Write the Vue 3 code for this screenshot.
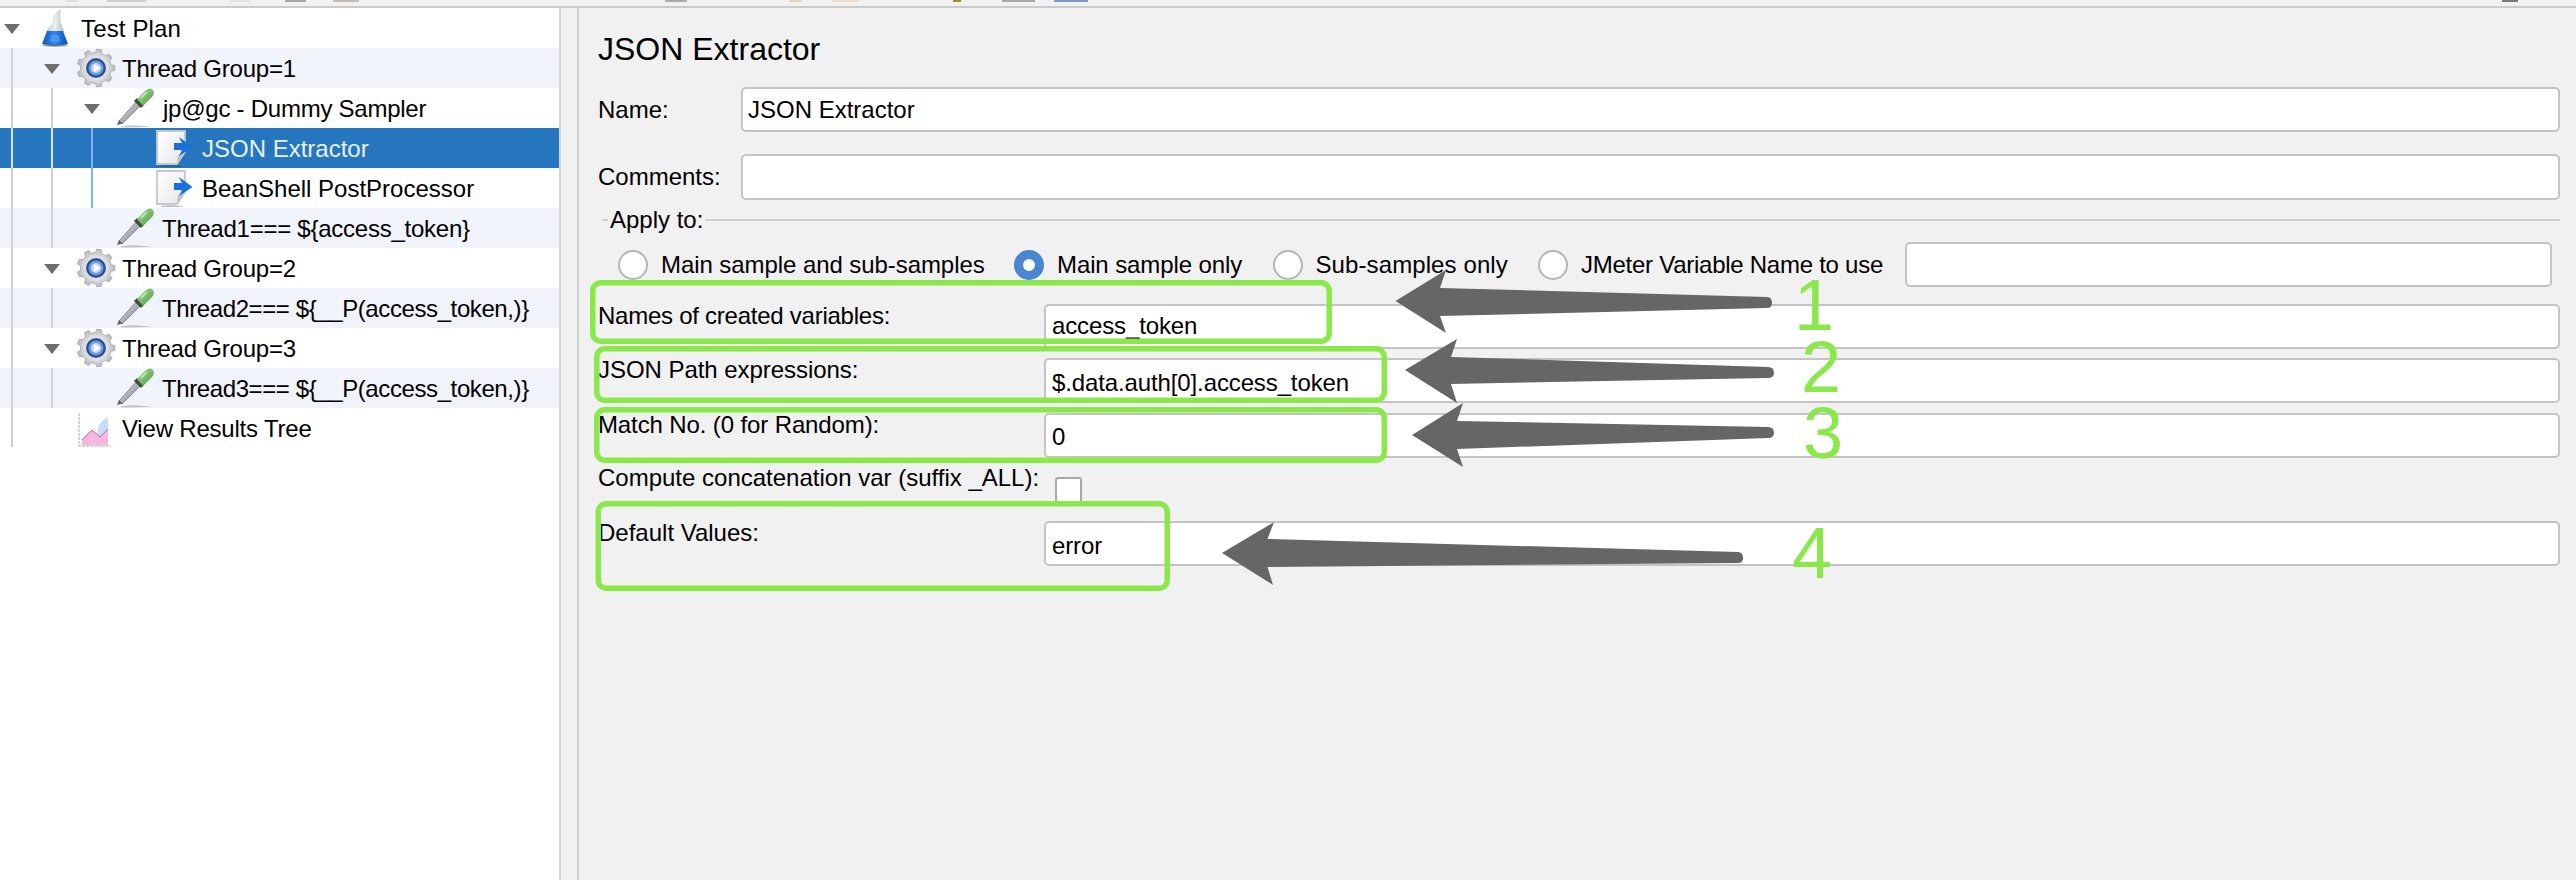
<script setup>
const gearPath = (() => {
  const cx = 20, cy = 20, teeth = 9, ro = 19, ri = 15.5
  let d = ''
  for (let i = 0; i < teeth; i++) {
    const a = (i / teeth) * Math.PI * 2
    const w = Math.PI / teeth
    const pts = [
      [ri, a - w * 0.62], [ro, a - w * 0.36], [ro, a + w * 0.36], [ri, a + w * 0.62]
    ]
    for (const [r, t] of pts) {
      d += (d ? 'L' : 'M') + (cx + r * Math.cos(t)).toFixed(2) + ' ' + (cy + r * Math.sin(t)).toFixed(2)
    }
  }
  return d + 'Z'
})()

const rows = [
  { label: 'Test Plan', icon: 'flask', arrow: 4, iconX: 40, textX: 81, guides: [], ls: 0.15 },
  { label: 'Thread Group=1', icon: 'gear', arrow: 44, iconX: 76, textX: 122, guides: [11], alt: true, ls: -0.2 },
  { label: 'jp@gc - Dummy Sampler', icon: 'dropper', arrow: 84, iconX: 116, textX: 163, guides: [11, 51], ls: -0.25 },
  { label: 'JSON Extractor', icon: 'doc', iconX: 155, textX: 202, guides: [11, 51, 91], selected: true, ls: 0 },
  { label: 'BeanShell PostProcessor', icon: 'doc', iconX: 155, textX: 202, guides: [11, 51, 91], ls: 0 },
  { label: 'Thread1=== ${access_token}', icon: 'dropper', iconX: 116, textX: 162, guides: [11, 51], alt: true, ls: -0.25 },
  { label: 'Thread Group=2', icon: 'gear', arrow: 44, iconX: 76, textX: 122, guides: [11], ls: -0.2 },
  { label: 'Thread2=== ${__P(access_token,)}', icon: 'dropper', iconX: 116, textX: 162, guides: [11, 51], alt: true, ls: -0.4 },
  { label: 'Thread Group=3', icon: 'gear', arrow: 44, iconX: 76, textX: 122, guides: [11], ls: -0.2 },
  { label: 'Thread3=== ${__P(access_token,)}', icon: 'dropper', iconX: 116, textX: 162, guides: [11, 51], alt: true, ls: -0.4 },
  { label: 'View Results Tree', icon: 'chart', iconX: 77, textX: 122, guides: [11], last: true, ls: -0.2 }
]

const radios = [
  { label: 'Main sample and sub-samples', on: false, ls: -0.07 },
  { label: 'Main sample only', on: true, ls: -0.1 },
  { label: 'Sub-samples only', on: false, ls: 0.1 },
  { label: 'JMeter Variable Name to use', on: false, ls: -0.26 }
]

const arrows = [
  '1395.5,301 1446,270 1440,288 1767,297 Q1772,297 1772,303 Q1772,308 1767,308 L1440,316 1446,333',
  '1405,370 1457,339 1451,357 1768,367 Q1774,367 1774,373 Q1774,378 1768,378 L1451,384 1457,403',
  '1412,435 1463,403 1457,421 1768,427 Q1774,427 1774,433 Q1774,438 1768,438 L1457,449 1463,467',
  '1222,553 1274,522 1267.5,539 1738,552 Q1743,552 1743,558 Q1743,563 1738,563 L1267.5,567 1273,585'
].map(p => 'M' + p + 'Z')

const boxes = [
  { x: 592.75, y: 282.75, w: 736.5, h: 58.5 },
  { x: 596.75, y: 348.75, w: 787.5, h: 51.5 },
  { x: 596.75, y: 409.75, w: 787.5, h: 50.5 },
  { x: 598.25, y: 503.75, w: 569, h: 84.5 }
]

const digits = ['1', '2', '3', '4']

const slivers = [
  { x: 66, w: 12, c: '#e2e2e2' },
  { x: 107, w: 39, c: '#d2d2d2' },
  { x: 230, w: 20, c: '#e6e6e6' },
  { x: 285, w: 21, c: '#a6a6a6' },
  { x: 333, w: 26, c: '#c2bfb8' },
  { x: 665, w: 22, c: '#acacac' },
  { x: 789, w: 12, c: '#e5d5c0' },
  { x: 832, w: 26, c: '#e8dccb' },
  { x: 953, w: 8, c: '#a88d2c' },
  { x: 1002, w: 33, c: '#a8a8a8' },
  { x: 1054, w: 34, c: '#7f9bc4' },
  { x: 2502, w: 16, c: '#7a7a7a' }
]
</script>

<template>
  <div class="page">
    <div class="strip">
      <i
        v-for="s in slivers"
        :key="s.x"
        class="sliver"
        :style="{ left: s.x + 'px', width: s.w + 'px', background: s.c }"
      ></i>
    </div>
    <div class="main">
      <aside class="tree">
        <div
          v-for="row in rows"
          :key="row.label"
          class="row"
          :class="{ alt: row.alt, selected: row.selected }"
        >
          <i
            v-for="g in row.guides"
            :key="g"
            class="guide"
            :class="{ blue: g === 91, last: row.last }"
            :style="{ left: g + 'px' }"
          ></i>
          <i v-if="row.arrow !== undefined" class="tri" :style="{ left: row.arrow + 'px' }"></i>
          <span class="icon" :style="{ left: row.iconX + 'px' }">
            <svg v-if="row.icon === 'flask'" width="30" height="40" viewBox="0 0 30 40">
              <defs>
                <linearGradient id="fl" x1="0" x2="1" y1="0" y2="0">
                  <stop offset="0" stop-color="#1a58bb" />
                  <stop offset=".5" stop-color="#2f86ea" />
                  <stop offset="1" stop-color="#0e4fb0" />
                </linearGradient>
                <linearGradient id="fg" x1="0" x2="1" y1="0" y2="0">
                  <stop offset="0" stop-color="#c3cad2" />
                  <stop offset=".5" stop-color="#eef1f4" />
                  <stop offset="1" stop-color="#b3bac3" />
                </linearGradient>
              </defs>
              <path d="M14 8 L20 2 V14 L24 24 H6 L14 14 Z" fill="url(#fg)" stroke="#c4c9cf" stroke-width=".8" />
              <path d="M7 23 H23 L28 36 Q15 40 2 36 Z" fill="url(#fl)" />
              <path d="M11 27 Q15 25 19 28 L20 34 H10 Z" fill="#5da6f5" opacity=".6" />
              <ellipse cx="15" cy="37.5" rx="13" ry="1.5" fill="#5b6878" opacity=".55" />
            </svg>
            <svg v-else-if="row.icon === 'gear'" width="40" height="40" viewBox="0 0 40 40">
              <defs>
                <radialGradient id="gr" cx=".5" cy=".5" r=".5">
                  <stop offset=".45" stop-color="#f0f1f3" />
                  <stop offset="1" stop-color="#b4b7bd" />
                </radialGradient>
              </defs>
              <path :d="gearPath" fill="url(#gr)" stroke="#b0b3b8" stroke-width="1" />
              <circle cx="20" cy="20" r="10" fill="#2a5298" />
              <circle cx="20" cy="20" r="7.5" fill="#6d9ad8" />
              <circle cx="20" cy="20" r="5" fill="#c6d9f2" />
              <path d="M18 16 L24.5 20 L18 24 Z" fill="#ffffff" />
            </svg>
            <svg v-else-if="row.icon === 'dropper'" width="40" height="40" viewBox="0 0 40 40">
              <defs>
                <linearGradient id="bulb" x1="0" y1="0" x2="1" y2="1">
                  <stop offset="0" stop-color="#a9df90" />
                  <stop offset="1" stop-color="#4a9a4a" />
                </linearGradient>
                <linearGradient id="glass" x1="0" y1="0" x2="1" y2="1">
                  <stop offset="0" stop-color="#eceef0" />
                  <stop offset=".55" stop-color="#a9adb2" />
                  <stop offset="1" stop-color="#55595e" />
                </linearGradient>
              </defs>
              <path d="M3 33 L20 14 L24 18 L6 36 Z" fill="url(#glass)" stroke="#74787d" stroke-width=".8" />
              <path d="M1 37 L3 32 L6.5 35.5 Z" fill="#5c6064" />
              <path d="M18 13 L21 10 L28 17 L25 20 Z" fill="#3f4a42" />
              <path d="M21 11 L30 2 Q34 -1 37 2 Q39 6 36 9 L27 18 Z" fill="url(#bulb)" />
              <path d="M25 10 L31 4" stroke="#cdeebe" stroke-width="1.6" />
              <path d="M5 38.5 Q18 36 36 39 L5 39.5 Z" fill="#8d9095" opacity=".5" />
            </svg>
            <svg v-else-if="row.icon === 'doc'" width="38" height="40" viewBox="0 0 38 40">
              <defs>
                <linearGradient id="pg" x1="0" x2="1" y1="0" y2="1">
                  <stop offset="0" stop-color="#ffffff" />
                  <stop offset="1" stop-color="#e6e7e9" />
                </linearGradient>
              </defs>
              <path d="M2 3 H30 V24 L22 36 H2 Z" fill="url(#pg)" stroke="#c5c7ca" stroke-width="1.8" />
              <path d="M22 36 L23 27 L30 24 Z" fill="#bfc2c6" />
              <path d="M19 15 H27 L24 9 L37.5 19 L24 28 L27 22 H19 Z" fill="#1a6fdc" />
              <path d="M6 38 Q18 36 30 39 L6 39 Z" fill="#1d3f66" opacity=".35" />
            </svg>
            <svg v-else-if="row.icon === 'chart'" width="36" height="40" viewBox="0 0 36 40">
              <path d="M2 5 V38 H34" fill="none" stroke="#c9c9c9" stroke-width="1.5" stroke-dasharray="3 1" />
              <path d="M20 32 Q19 14 31 9 V32 Z" fill="#c6dff8" />
              <path d="M5 37 V32 L15 22 L23 29 L31 21 V37 Z" fill="#f5b6e4" />
              <path d="M5 32 L15 22 L23 29 L31 21" fill="none" stroke="#c55bb0" stroke-width="1" />
            </svg>
          </span>
          <span
            class="row-text"
            :style="{ marginLeft: row.textX + 'px', letterSpacing: row.ls + 'px' }"
          >{{ row.label }}</span>
        </div>
      </aside>

      <div class="splitter"></div>

      <section class="panel">
        <h1 class="title">JSON Extractor</h1>

        <div class="field name-row">
          <label class="lbl-top">Name:</label>
          <div class="input"><span>JSON Extractor</span></div>
        </div>
        <div class="field comments-row">
          <label class="lbl-top">Comments:</label>
          <div class="input"></div>
        </div>

        <div class="legend">
          <i class="legend-dash"></i>
          <span>Apply to:</span>
          <i class="legend-line"></i>
        </div>

        <div class="radios">
          <div v-for="r in radios" :key="r.label" class="radio-item">
            <i class="radio" :class="{ on: r.on }"></i>
            <span :style="{ letterSpacing: r.ls + 'px' }">{{ r.label }}</span>
          </div>
          <div class="input"></div>
        </div>

        <div class="wide first">
          <label>Names of created variables:</label>
          <div class="input"><span>access_token</span></div>
        </div>
        <div class="wide second">
          <label>JSON Path expressions:</label>
          <div class="input"><span>$.data.auth[0].access_token</span></div>
        </div>
        <div class="wide third">
          <label>Match No. (0 for Random):</label>
          <div class="input"><span>0</span></div>
        </div>
        <div class="compute">
          <label>Compute concatenation var (suffix _ALL):</label>
          <i class="check"></i>
        </div>
        <div class="wide fourth">
          <label>Default Values:</label>
          <div class="input"><span>error</span></div>
        </div>
      </section>
    </div>

    <svg class="marks" width="2576" height="880" viewBox="0 0 2576 880">
      <rect
        v-for="(b, i) in boxes"
        :key="i"
        :x="b.x"
        :y="b.y"
        :width="b.w"
        :height="b.h"
        rx="8"
        fill="none"
        stroke="#8ae84b"
        stroke-width="5.5"
      />
      <path v-for="(a, i) in arrows" :key="'a' + i" :d="a" fill="#666666" />
    </svg>
    <span v-for="d in digits" :key="d" class="digit" :class="'d' + d">{{ d }}</span>
  </div>
</template>

<style>
html, body { margin: 0; background: #f1f1f1; }
</style>

<style scoped>
.page {
  position: relative;
  width: 2576px;
  height: 880px;
  overflow: hidden;
  background: #f1f1f1;
  font-family: "Liberation Sans", Arial, sans-serif;
  font-size: 24px;
  color: #000;
}
.strip {
  position: relative;
  height: 6px;
  background: #f1f1f1;
  border-bottom: 2px solid #cbcbcb;
}
.sliver {
  position: absolute;
  top: 0;
  height: 2px;
}
.main {
  display: flex;
  height: 872px;
}
.tree {
  width: 559px;
  background: #fff;
  flex: none;
}
.row {
  position: relative;
  height: 40px;
  display: flex;
  align-items: center;
  white-space: nowrap;
}
.row.alt { background: #f0f3f9; }
.row.selected { background: #2675bf; color: #e8f0f8; }
.guide {
  position: absolute;
  top: 0;
  bottom: 0;
  width: 2px;
  background: #cfcfcf;
}
.guide.blue { background: #7db6ee; }
.guide.last { bottom: 1px; }
.row.selected .guide { background: #d6e4f2; }
.row.selected .guide.blue { background: #7db6ee; }
.tri {
  position: absolute;
  top: 16px;
  width: 0;
  height: 0;
  border-left: 8px solid transparent;
  border-right: 8px solid transparent;
  border-top: 10px solid #6e6e6e;
}
.icon {
  position: absolute;
  top: 0;
  height: 40px;
  display: flex;
}
.row-text { display: block; line-height: 40px; padding-top: 2px; }
.splitter {
  box-sizing: border-box;
  width: 20px;
  flex: none;
  border-left: 2px solid #d6d6d6;
  border-right: 2px solid #cfcfcf;
}
.panel {
  flex: 1;
  padding: 0 16px 0 19px;
  min-width: 0;
}
.title {
  margin: 0;
  height: 79px;
  font-size: 32px;
  font-weight: 400;
  line-height: 82px;
}
.input {
  box-sizing: border-box;
  flex: 1;
  min-width: 0;
  height: 45px;
  background: #fff;
  border: 2px solid #c4c4c4;
  border-radius: 5px;
  padding: 0 0 0 6px;
  display: flex;
  align-items: center;
}
.field {
  display: flex;
  align-items: center;
}
.lbl-top { width: 143px; flex: none; }
.name-row .input { padding-left: 5px; }
.comments-row { margin-top: 22px; }
.comments-row .input { height: 46px; }
.legend {
  display: flex;
  align-items: center;
  height: 24px;
  margin-top: 8px;
  padding-left: 4px;
  gap: 2px;
}
.legend-dash { width: 6px; height: 2px; background: #cfcfcf; }
.legend-line { flex: 1; height: 2px; background: #cfcfcf; }
.radios {
  display: grid;
  grid-template-columns: 396px 258.5px 265.5px 366.5px 1fr;
  align-items: center;
  margin-top: 10px;
  padding-left: 20px;
  padding-right: 8px;
  height: 45px;
}
.radio-item {
  display: flex;
  align-items: center;
  gap: 13px;
  white-space: nowrap;
}
.radio {
  box-sizing: border-box;
  width: 30px;
  height: 30px;
  border-radius: 50%;
  background: #fff;
  border: 2px solid #b4b4b4;
  flex: none;
}
.radio.on { border: 9px solid #4a86cf; }
.wide {
  display: flex;
  align-items: flex-start;
}
.wide label { width: 446px; flex: none; line-height: 24px; }
.wide .input { padding-top: 4px; letter-spacing: -0.12px; }
.first label { letter-spacing: -0.25px; }
.first { margin-top: 17px; }
.first .input { padding-top: 0; padding-bottom: 2px; }
.second { margin-top: 9px; }
.second label { letter-spacing: -0.05px; }
.third { margin-top: 10px; }
.third label { letter-spacing: -0.12px; }
.third .input { padding-top: 2px; }
.compute {
  display: flex;
  align-items: flex-start;
  height: 51px;
  margin-top: 8px;
}
.compute label { width: 457px; flex: none; line-height: 24px; }
.check {
  box-sizing: border-box;
  width: 27px;
  height: 28px;
  margin-top: 11px;
  background: #fff;
  border: 2px solid #a8a8a8;
  border-radius: 3px;
}
.fourth { margin-top: 4px; }
.marks {
  position: absolute;
  left: 0;
  top: 0;
  pointer-events: none;
}
.digit {
  position: absolute;
  font-size: 72px;
  line-height: 52px;
  color: #8ae84b;
}
.d1 { left: 1794px; top: 279px; }
.d2 { left: 1801px; top: 341px; }
.d3 { left: 1803px; top: 407px; }
.d4 { left: 1792px; top: 527px; }
</style>
